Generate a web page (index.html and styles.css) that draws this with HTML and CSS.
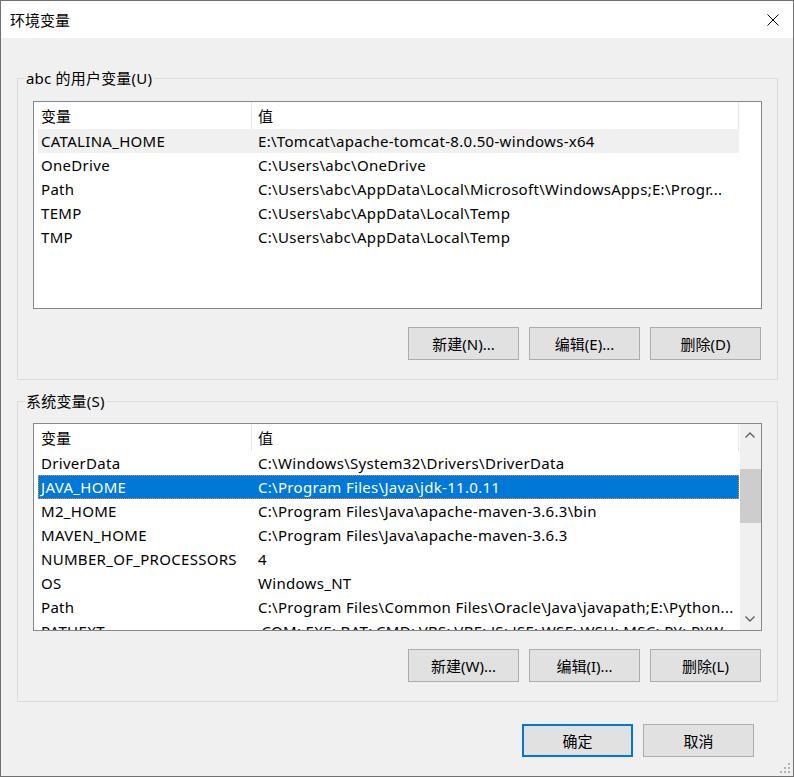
FILE: index.html
```html
<!DOCTYPE html>
<html lang="zh-CN">
<head>
<meta charset="utf-8">
<title>环境变量</title>
<link rel="stylesheet" href="styles.css">
</head>
<body>
<div class="window">
  <div class="titlebar">
    <span class="title">环境变量</span>
    <svg class="close" width="12" height="12" viewBox="0 0 12 12"><path d="M0.5 0.5 L11.5 11.5 M11.5 0.5 L0.5 11.5" stroke="#000" stroke-width="1" fill="none"/></svg>
  </div>
  <div class="body">
    <fieldset class="group group-user">
      <legend>abc 的用户变量(U)</legend>
      <div class="group-body">
        <div class="list">
          <div class="rows">
            <div class="row header"><span class="c1">变量</span><span class="c2">值</span></div>
            <div class="row hot"><span class="c1">CATALINA_HOME</span><span class="c2">E:\Tomcat\apache-tomcat-8.0.50-windows-x64</span></div>
            <div class="row"><span class="c1">OneDrive</span><span class="c2">C:\Users\abc\OneDrive</span></div>
            <div class="row"><span class="c1">Path</span><span class="c2">C:\Users\abc\AppData\Local\Microsoft\WindowsApps;E:\Progr...</span></div>
            <div class="row"><span class="c1">TEMP</span><span class="c2">C:\Users\abc\AppData\Local\Temp</span></div>
            <div class="row"><span class="c1">TMP</span><span class="c2">C:\Users\abc\AppData\Local\Temp</span></div>
          </div>
        </div>
        <div class="buttons">
          <button class="btn">新建(N)...</button>
          <button class="btn">编辑(E)...</button>
          <button class="btn">删除(D)</button>
        </div>
      </div>
    </fieldset>
    <fieldset class="group group-system">
      <legend>系统变量(S)</legend>
      <div class="group-body">
        <div class="list">
          <div class="rows">
            <div class="row header"><span class="c1">变量</span><span class="c2">值</span></div>
            <div class="row"><span class="c1">DriverData</span><span class="c2">C:\Windows\System32\Drivers\DriverData</span></div>
            <div class="row selected"><span class="c1">JAVA_HOME</span><span class="c2">C:\Program Files\Java\jdk-11.0.11</span></div>
            <div class="row"><span class="c1">M2_HOME</span><span class="c2">C:\Program Files\Java\apache-maven-3.6.3\bin</span></div>
            <div class="row"><span class="c1">MAVEN_HOME</span><span class="c2">C:\Program Files\Java\apache-maven-3.6.3</span></div>
            <div class="row"><span class="c1">NUMBER_OF_PROCESSORS</span><span class="c2">4</span></div>
            <div class="row"><span class="c1">OS</span><span class="c2">Windows_NT</span></div>
            <div class="row"><span class="c1">Path</span><span class="c2">C:\Program Files\Common Files\Oracle\Java\javapath;E:\Python...</span></div>
            <div class="row"><span class="c1">PATHEXT</span><span class="c2">.COM;.EXE;.BAT;.CMD;.VBS;.VBE;.JS;.JSE;.WSF;.WSH;.MSC;.PY;.PYW</span></div>
          </div>
          <div class="scrollbar">
            <div class="sb-btn"><svg width="21" height="21" viewBox="0 0 21 21"><polyline points="5.5,13.5 10,9 14.5,13.5" fill="none" stroke="#606060" stroke-width="1.4"/></svg></div>
            <div class="sb-track"><div class="sb-thumb"></div></div>
            <div class="sb-btn"><svg width="21" height="21" viewBox="0 0 21 21"><polyline points="5.5,7.5 10,12 14.5,7.5" fill="none" stroke="#606060" stroke-width="1.4"/></svg></div>
          </div>
        </div>
        <div class="buttons">
          <button class="btn">新建(W)...</button>
          <button class="btn">编辑(I)...</button>
          <button class="btn">删除(L)</button>
        </div>
      </div>
    </fieldset>
    <div class="footer">
      <button class="btn default">确定</button>
      <button class="btn">取消</button>
    </div>
  </div>
  <svg class="grip" width="14" height="12" viewBox="0 0 14 12">
    <rect x="10" y="0" width="2" height="2" fill="#b4b4b4"/>
    <rect x="6" y="4" width="2" height="2" fill="#b4b4b4"/>
    <rect x="10" y="4" width="2" height="2" fill="#b4b4b4"/>
    <rect x="2" y="8" width="2" height="2" fill="#b4b4b4"/>
    <rect x="6" y="8" width="2" height="2" fill="#b4b4b4"/>
    <rect x="10" y="8" width="2" height="2" fill="#b4b4b4"/>
  </svg>
</div>
</body>
</html>
```

FILE: styles.css
```css
* { box-sizing: border-box; }
html, body { margin: 0; padding: 0; }
body {
  font-family: "Microsoft YaHei UI", "Segoe UI", "Noto Sans", "Noto Sans CJK SC", sans-serif;
  font-size: 15px;
  color: #000;
  background: #fff;
}
.window {
  position: relative;
  width: 794px;
  height: 777px;
  border: 1px solid #707070;
  display: flex;
  flex-direction: column;
  background: #f0f0f0;
}
.titlebar {
  height: 37px;
  background: #fff;
  display: flex;
  align-items: center;
  justify-content: space-between;
  padding: 0 14px 0 9px;
  flex: none;
}
.title { line-height: 20px; }
.close { display: block; }
.body {
  flex: 1;
  display: flex;
  flex-direction: column;
  background: #f0f0f0;
}
.group {
  margin: 0 15px 0 16px;
  padding: 0;
  border: 1px solid #dcdcdc;
  min-width: 0;
}
.group-user { margin-top: 30px; }
.group-system { margin-top: 11px; }
.group legend {
  margin-left: 7px;
  padding: 0 2px 0 1px;
  line-height: 21px;
  height: 21px;
  letter-spacing: 0.2px;
}
.group-body { padding: 12px 15px 19px 15px; }
.group-system .group-body { padding-top: 11px; }
.list {
  height: 208px;
  border: 1px solid #828790;
  background: #fff;
  display: flex;
  overflow: hidden;
}
.rows {
  flex: 1;
  padding-left: 4px;
  overflow: hidden;
  min-width: 0;
}
.row {
  display: grid;
  grid-template-columns: 214px 487px;
  width: 701px;
  height: 24px;
  line-height: 24px;
  white-space: nowrap;
  letter-spacing: 0.3px;
}
.row span { overflow: hidden; }
.row .c1 { padding-left: 3px; }
.row .c2 { padding-left: 6px; }
.row.header { height: 27px; letter-spacing: 0; }
.row.header span {
  border-right: 1px solid #e5e5e5;
  padding-top: 2px;
  height: 27px;
}
.row.hot { background: #f0f0f0; }
.row.selected {
  background: #0078d7;
  color: #fff;
  outline: 1px dotted #ff8728;
  outline-offset: -1px;
}
.scrollbar {
  width: 21px;
  flex: none;
  background: #f0f0f0;
  display: flex;
  flex-direction: column;
}
.sb-btn { height: 21px; flex: none; }
.sb-btn svg { display: block; }
.sb-track { flex: 1; }
.sb-thumb {
  margin-top: 24px;
  height: 54px;
  background: #cdcdcd;
}
.buttons {
  display: flex;
  justify-content: flex-end;
  gap: 10px;
  margin-top: 18px;
  padding-right: 1px;
}
.btn {
  width: 111px;
  height: 33px;
  font: inherit;
  color: #000;
  background: #e1e1e1;
  border: 1px solid #adadad;
  padding: 0;
  margin: 0;
}
.btn.default { border: 2px solid #0078d7; }
.footer {
  display: flex;
  justify-content: flex-end;
  gap: 10px;
  margin-top: 22px;
  padding-right: 39px;
}
.grip {
  position: absolute;
  right: 1px;
  bottom: 1px;
}
```
